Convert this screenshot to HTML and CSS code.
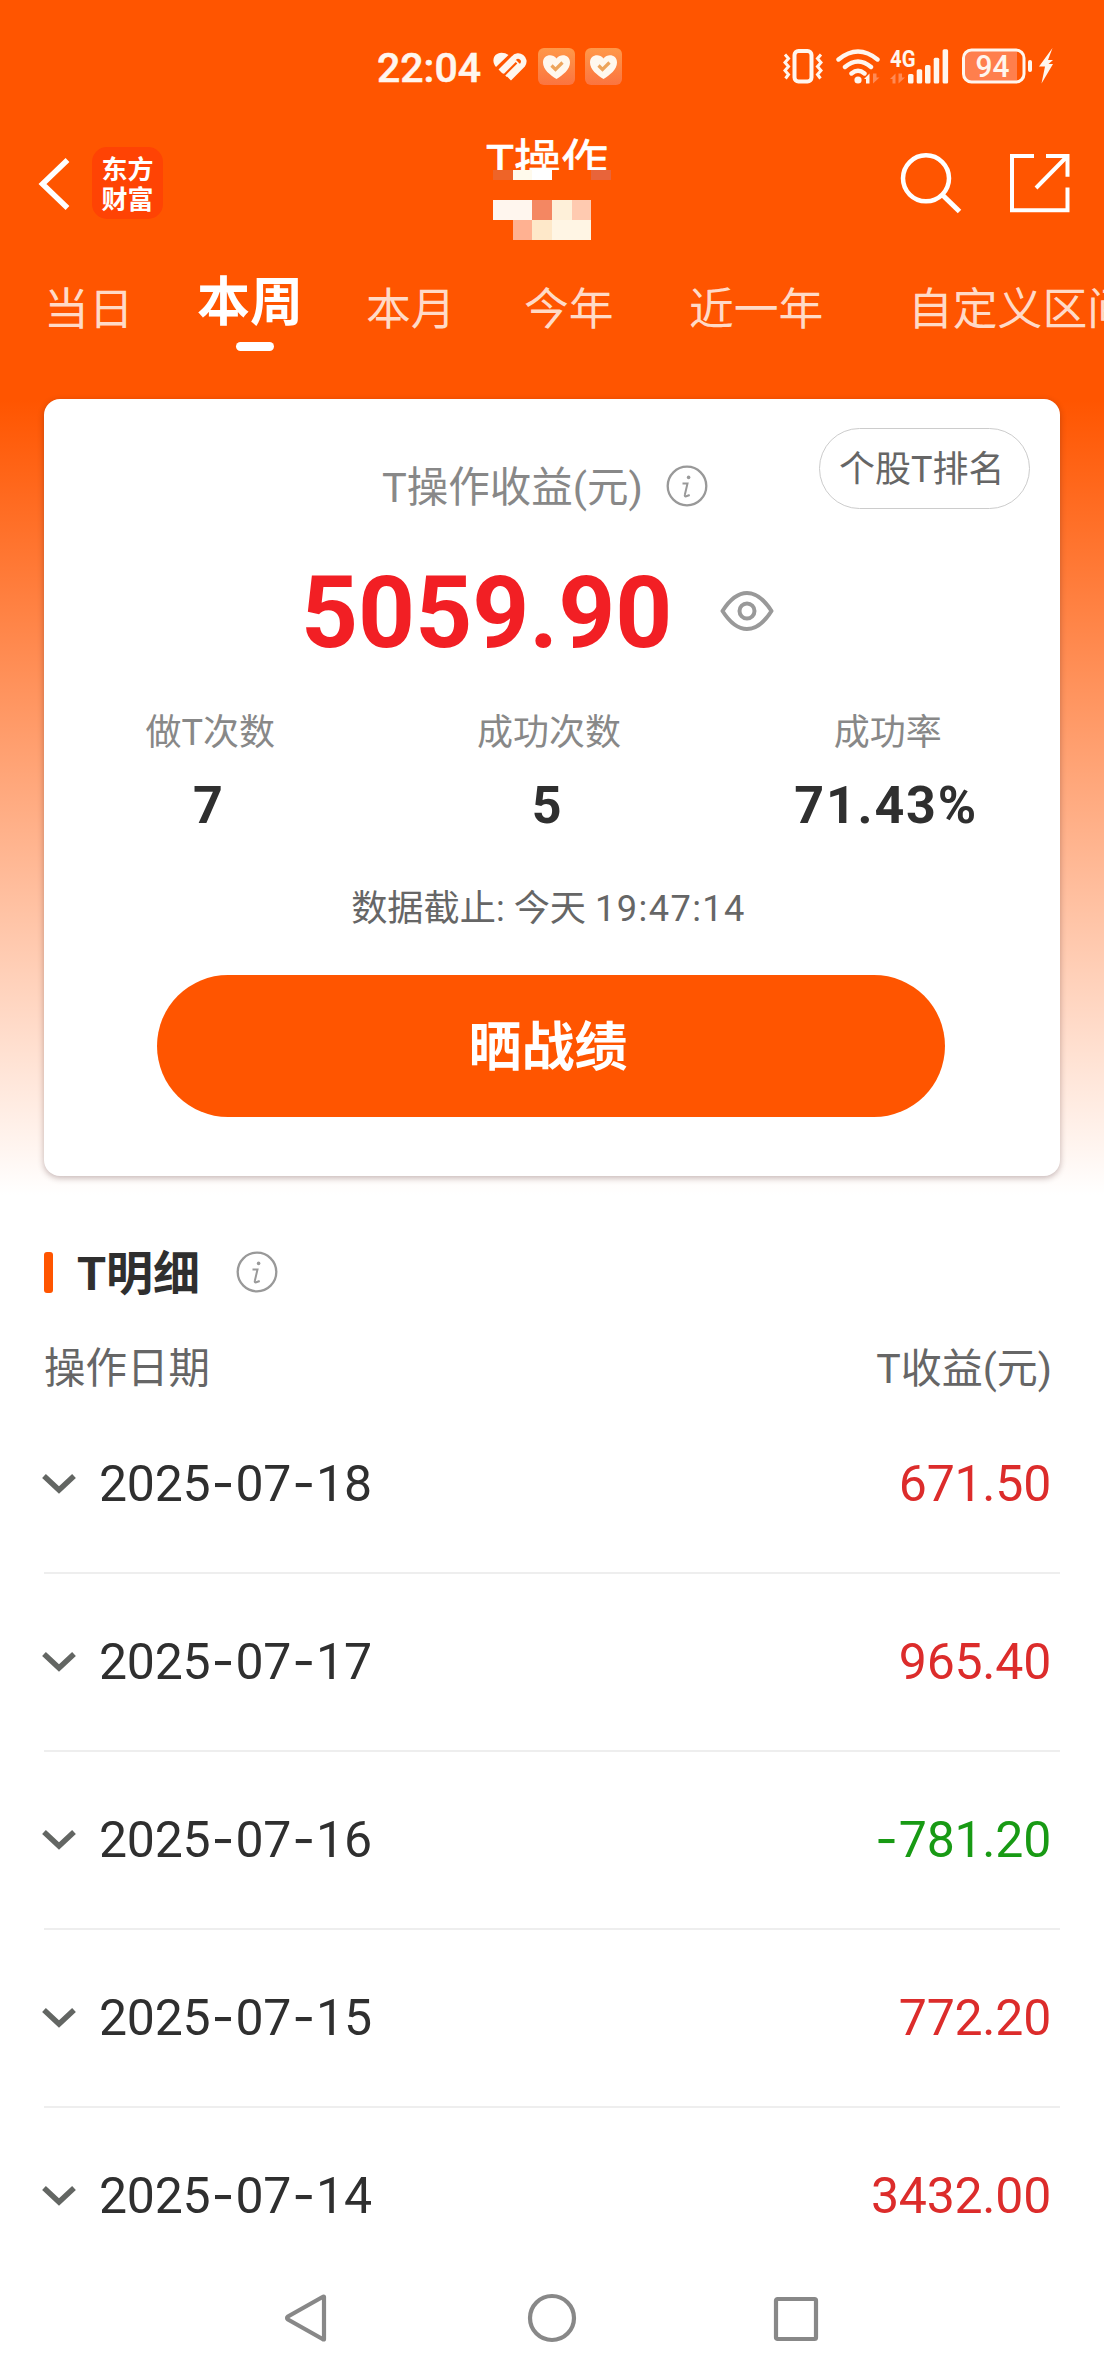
FILE: index.html
```html
<!DOCTYPE html>
<html lang="zh-CN">
<head>
<meta charset="utf-8">
<title>T操作</title>
<link rel="stylesheet" href="styles.css">
</head>
<body>
<svg class="defs" width="0" height="0" aria-hidden="true">
  <symbol id="info" viewBox="0 0 42 42">
    <circle cx="21" cy="21" r="19.3" fill="none" stroke="#999" stroke-width="2.3"/>
    <circle cx="22.6" cy="12.4" r="1.8" fill="#999"/>
    <path d="M16.5 18.4h5l-2.6 11.2q-.6 2.2 1.4 1.7l3.4-1.3" fill="none" stroke="#999" stroke-width="2"/>
  </symbol>
  <symbol id="chev" viewBox="0 0 36 24">
    <path d="M3 4L18 18L33 4" fill="none" stroke="#636663" stroke-width="5.500"/>
  </symbol>
  <symbol id="care" viewBox="0 0 37 37">
    <rect width="37" height="37" rx="6" fill="url(#careBg)"/>
    <path d="M18.500 31C12 27 5 21.500 5 14.500C5 7 14 5 18.500 10.500C23 5 32 7 32 14.500C32 21.500 25 27 18.500 31Z" fill="#fff8ee"/>
    <path d="M13.500 17.500L17.500 21.500L24.500 14.500" fill="none" stroke="#eda55c" stroke-width="3.200"/>
  </symbol>
  <linearGradient id="careBg" x1="0" y1="0" x2="0" y2="1">
    <stop offset="0" stop-color="#ff9849"/><stop offset="1" stop-color="#fb7440"/>
  </linearGradient>
</svg>

<main class="page">
  <header class="status">
    <span class="time">22:04</span>
    <svg class="health" width="36" height="32" viewBox="0 0 36 32">
      <path d="M4 17C-1 11 1.500 3 9.500 2.800Q13.500 2.800 16.500 5L4 17Z" fill="#fff6ee"/>
      <path d="M8.500 21.500L21.500 8.500C26.500 2.500 35 9 30.500 15L17 28.500M12.800 25L26 12" fill="none" stroke="#fff6ee" stroke-width="5.600"/>
      <path d="M11.800 25.500L24.500 12.800" fill="none" stroke="#ff5500" stroke-width="2.200"/>
    </svg>
    <svg class="care" width="37" height="37"><use href="#care"/></svg>
    <svg class="care2" width="37" height="37"><use href="#care"/></svg>
    <svg class="signals" width="274" height="40" viewBox="782 46 274 40">
      <g fill="none" stroke="#fff6ee">
        <rect x="794.500" y="51" width="17" height="30.500" rx="4" stroke-width="4"/>
        <path d="M785 54.500l3.500 4l-3.500 4l3.500 4l-3.500 4l3.500 4l-3 4M821 54.500l-3.500 4l3.500 4l-3.500 4l3.500 4l-3.500 4l3 4" stroke-width="3"/>
        <g stroke-width="4.400" stroke-linecap="round">
          <path d="M838.500 59.500Q858 43.500 877.500 59.500M845 67Q858 56 871 67M851.500 73.500Q858 68 864.500 73.500"/>
        </g>
      </g>
      <circle cx="858" cy="80" r="3.600" fill="#fff6ee"/>
      <path d="M864 79l5.500-5.500v10h-3.500v-4.500z" fill="#fff6ee"/>
      <path d="M873 73.500v10l6.500-6h-3v-4zM890 79l5.500-5.500v10h-3v-4.500zM898.500 73.500v10l6.500-6h-3v-4z" fill="#ff8a55"/>
      <text class="net" x="890" y="66.500" textLength="25.500" lengthAdjust="spacingAndGlyphs">4G</text>
      <g fill="#fff6ee">
        <rect x="908" y="74" width="5.500" height="9.500" rx="1.500"/>
        <rect x="916.700" y="69.300" width="5.500" height="14.200" rx="1.500"/>
        <rect x="925" y="65" width="5.500" height="18.500" rx="1.500"/>
        <rect x="933.700" y="57.700" width="5.500" height="25.800" rx="1.500"/>
        <rect x="942.600" y="49.300" width="5.500" height="34.200" rx="1.500"/>
        <rect x="1028" y="60" width="4" height="12" rx="2"/>
        <path d="M1052.500 48L1039 66.500H1045L1041.500 83.500L1053 64H1048.500L1053 60H1048Z"/>
      </g>
      <path d="M971 50H1017V82H971Q964 82 964 75V57Q964 50 971 50Z" fill="#ff7f4d"/>
      <rect x="963.500" y="50" width="60.500" height="32" rx="8" fill="none" stroke="#fff6ee" stroke-width="3"/>
      <text class="level" x="975.500" y="76.500" textLength="34" lengthAdjust="spacingAndGlyphs">94</text>
    </svg>
  </header>

  <div class="titlebar">
    <svg class="back" width="40" height="60" viewBox="36 156 40 60">
      <path d="M67.500 160L42.500 184L67.500 208" fill="none" stroke="#fff" stroke-width="5.500"/>
    </svg>
    <div class="logo">东方<br>财富</div>
    <div class="heading">
      <h1>T操作</h1>
      <svg width="126" height="70" viewBox="486 170 126 70" shape-rendering="crispEdges">
        <rect x="493" y="170" width="20" height="10" fill="#ee6428"/>
        <rect x="513" y="170" width="19" height="10" fill="#fffaec"/>
        <rect x="532" y="170" width="20" height="10" fill="#fff"/>
        <rect x="591" y="170" width="20" height="10" fill="#e8643a"/>
        <rect x="493" y="200" width="39" height="20" fill="#fff6ee"/>
        <rect x="532" y="200" width="20" height="20" fill="#f48762"/>
        <rect x="552" y="200" width="20" height="20" fill="#fef0d9"/>
        <rect x="572" y="200" width="19" height="20" fill="#ffcab0"/>
        <rect x="513" y="220" width="19" height="20" fill="#ffb191"/>
        <rect x="532" y="220" width="20" height="20" fill="#fee8c9"/>
        <rect x="552" y="220" width="39" height="20" fill="#fff5e4"/>
      </svg>
    </div>
    <svg class="actions" width="174" height="64" viewBox="898 151 174 64">
      <g fill="none" stroke="#fff">
        <circle cx="926" cy="178.300" r="23" stroke-width="4.500"/>
        <path d="M942 194.500L959.500 211.500" stroke-width="5"/>
        <path d="M1034 156H1012V210.300H1067.500V187.500M1046 156H1067.500V176.700M1067 156.500L1036 188" stroke-width="4"/>
      </g>
    </svg>
  </div>

  <nav class="tabs">
    <span class="tab">当日</span>
    <span class="tab active">本周<i></i></span>
    <span class="tab">本月</span>
    <span class="tab">今年</span>
    <span class="tab">近一年</span>
    <span class="tab">自定义区间</span>
  </nav>

  <section class="card">
    <div class="card-head">
      <span class="label">T操作收益(元)</span>
      <svg class="info" width="42" height="42"><use href="#info"/></svg>
      <span class="pill">个股T排名</span>
    </div>
    <div class="total">
      <span class="amount">5059.90</span>
      <svg width="56" height="44" viewBox="0 0 56 44" fill="none" stroke="#999">
        <path d="M3.500 22Q15 4 28 4Q41 4 52.500 22Q41 40 28 40Q15 40 3.500 22Z" stroke-width="4" stroke-linejoin="round"/>
        <circle cx="28" cy="22" r="7.500" stroke-width="4"/>
      </svg>
    </div>
    <div class="stats">
      <div><span>做T次数</span><b>7</b></div>
      <div><span>成功次数</span><b>5</b></div>
      <div><span>成功率</span><b>71.43%</b></div>
    </div>
    <p class="asof">数据截止: 今天 <span>19:47:14</span></p>
    <div class="share">晒战绩</div>
  </section>

  <section class="detail">
    <div class="detail-head">
      <i class="bar"></i>
      <h2>T明细</h2>
      <svg class="info" width="42" height="42"><use href="#info"/></svg>
    </div>
    <div class="columns"><span>操作日期</span><span>T收益(元)</span></div>
    <div class="row"><svg width="36" height="24"><use href="#chev"/></svg><span class="date">2025<i>-</i>07<i>-</i>18</span><span class="gain">671.50</span></div>
    <div class="row"><svg width="36" height="24"><use href="#chev"/></svg><span class="date">2025<i>-</i>07<i>-</i>17</span><span class="gain">965.40</span></div>
    <div class="row"><svg width="36" height="24"><use href="#chev"/></svg><span class="date">2025<i>-</i>07<i>-</i>16</span><span class="gain loss"><i>-</i>781.20</span></div>
    <div class="row"><svg width="36" height="24"><use href="#chev"/></svg><span class="date">2025<i>-</i>07<i>-</i>15</span><span class="gain">772.20</span></div>
    <div class="row"><svg width="36" height="24"><use href="#chev"/></svg><span class="date">2025<i>-</i>07<i>-</i>14</span><span class="gain">3432.00</span></div>
  </section>

  <footer class="sysnav">
    <svg width="48" height="52" viewBox="0 0 48 52"><path d="M41 5V47Q41 48 39.500 47L5 27.500Q3 26 5 24.500L39.500 5Q41 4 41 5Z"/></svg>
    <svg width="52" height="52" viewBox="0 0 52 52"><circle cx="26" cy="26" r="22"/></svg>
    <svg width="48" height="52" viewBox="0 0 48 52"><rect x="4" y="7" width="40" height="40" rx="1.500"/></svg>
  </footer>
</main>
</body>
</html>
```
FILE: styles.css
```css
* { box-sizing: border-box; margin: 0; padding: 0; }
body { background: #fff; font-family: Roboto, "Noto Sans CJK SC", sans-serif; }
i { font-style: normal; }
svg { display: block; flex: none; }
.defs { position: absolute; }
.page {
  width: 1104px; height: 2376px; overflow: hidden;
  background: linear-gradient(#ff5500 0, #ff5500 400px, #fff 1195px) #fff;
}

.status { display: flex; align-items: center; height: 132px; padding-left: 377px; color: #fff6ee; }
.time { width: 115px; padding-top: 4px; font-size: 41px; line-height: 48px; font-weight: 500; -webkit-text-stroke: .5px #fff6ee; }
.care { margin-left: 10px; }
.care2 { margin-left: 10px; }
.signals { margin-left: 160px; }
.net { font-size: 23px; font-weight: 700; fill: #fff6ee; }
.level { font-size: 31px; font-weight: 500; fill: #fff6ee; }

.titlebar { display: flex; align-items: center; height: 108px; padding: 0 32px 0 36px; color: #fff; }
.logo {
  width: 71px; height: 72px; margin: 0 0 6px 16px; padding-top: 6px; border-radius: 15px;
  background: #ff4304; font: 700 26px/30px "Noto Sans CJK SC", sans-serif; text-align: center;
}
.heading { width: 126px; margin: 6px 0 0 323px; }
h1 {
  height: 32px; overflow: hidden; font-size: 47px; line-height: 47px; font-weight: 400; white-space: nowrap;
  -webkit-text-stroke: .7px #fff;
}
.actions { margin-left: auto; margin-bottom: 6px; }

.tabs {
  display: grid; grid-template-columns: 153px 169px 158px 165px 219px 240px;
  height: 140px; padding-left: 44px; overflow: hidden; white-space: nowrap;
}
.tab { font-size: 44.8px; line-height: 140px; color: #ffdac7; }
.active { padding-top: 24px; font-size: 53px; line-height: 78px; font-weight: 700; color: #fff; }
.active i { display: block; width: 38px; height: 9px; margin-left: 39px; border-radius: 5px; background: #fff; }

.card {
  width: 1016px; height: 777px; margin: 19px 44px 0; border-radius: 16px;
  background: #fff; box-shadow: 0 2px 6px rgba(60, 20, 20, .3);
}
.card-head { display: flex; height: 121px; padding: 0 30px 0 338px; }
.label { margin-top: 59px; font-size: 41.5px; line-height: 60px; color: #888; }
.card-head .info { margin: 66px 0 0 23px; }
.pill {
  width: 211px; height: 81px; margin: 29px 0 0 auto; padding-left: 19px; border: 1.500px solid #ccc; border-radius: 41px;
  font-size: 36px; line-height: 82px; color: #666;
}
.total { display: flex; align-items: center; height: 100px; margin-top: 43px; padding-left: 257px; }
.total svg { margin-bottom: 4px; }
.amount { width: 417.5px; font-size: 99.5px; line-height: 100px; font-weight: 700; color: #f21f24; }
.stats { display: grid; grid-template-columns: repeat(3, 1fr); margin: 45px 3px 0 -3px; text-align: center; }
.stats span { display: block; font-size: 36px; line-height: 50px; color: #888; }
.stats b { display: block; margin: 18px 3px 0 0; font-size: 52px; line-height: 60px; letter-spacing: 1.8px; color: #2f2f2f; }
.asof { margin: 48px 7px 0 0; font-size: 36.2px; line-height: 50px; color: #666; text-align: center; }
.asof span { letter-spacing: 1.4px; }
.share {
  width: 788px; height: 142px; margin: 41px auto 0 113px; padding: 4px 6px 0 0; border-radius: 71px;
  background: #ff5500; color: #fff; font-size: 53px; line-height: 138px; font-weight: 700; text-align: center;
}

.detail { padding: 68px 44px 0; }
.detail-head { display: flex; align-items: center; height: 60px; }
.bar { width: 9px; height: 41px; margin-bottom: 4px; border-radius: 3px; background: #ff5500; }
h2 { width: 159px; margin-left: 24px; font-size: 47px; line-height: 60px; font-weight: 700; color: #2f2f2f; }
.detail-head .info { margin-bottom: 4px; }
.columns { display: flex; justify-content: space-between; margin-top: 38px; padding-right: 8px; font-size: 41.5px; line-height: 54px; color: #666; }
.columns span:last-child { font-size: 41px; }
.row { display: flex; align-items: center; height: 178px; padding-right: 9px; border-bottom: 2px solid #eee; font-size: 50px; line-height: 60px; letter-spacing: -.25px; }
.row:last-child { border-color: transparent; }
.row svg { margin-left: -3px; }
.date { margin-left: 22px; color: #2f2f2f; }
.row i { display: inline-block; width: 25px; font-family: Inter, sans-serif; line-height: 50px; text-align: center; }
.gain { margin-left: auto; color: #dc2c2b; }
.loss { color: #189a14; }

.sysnav { display: flex; height: 64px; align-items: center; padding-left: 283px; }
.sysnav svg { fill: none; stroke: #888; stroke-width: 4.2px; }
.sysnav svg + svg { margin-left: 195px; }
.sysnav svg:last-child { margin-left: 194px; }
```
